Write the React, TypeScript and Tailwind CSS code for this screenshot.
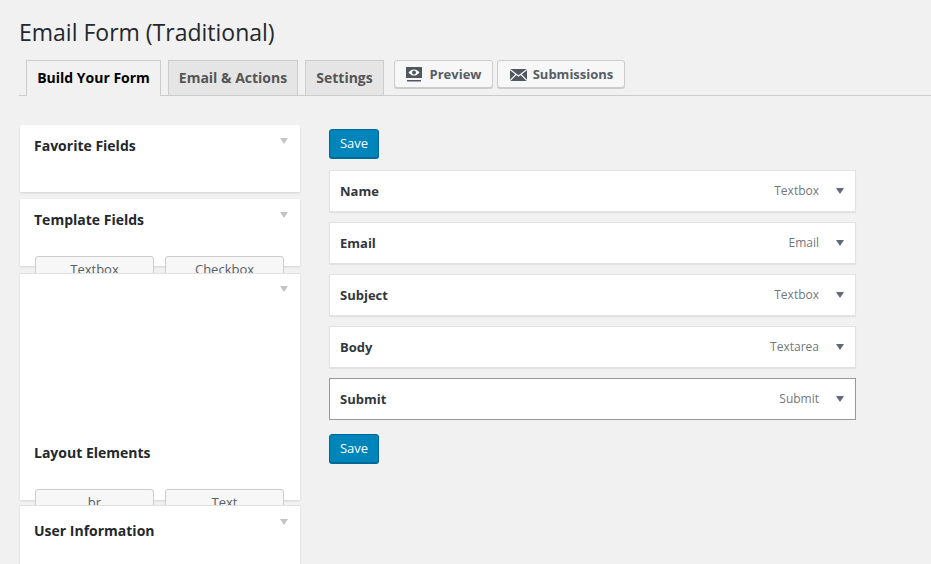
import React from 'react';

const Caret = ({ className }: { className: string }) => (
  <span className={`block w-0 h-0 border-l-[4px] border-r-[4px] border-t-[6px] border-l-transparent border-r-transparent ${className}`} />
);

const Panel = ({ title, height, gap, titleClass = 'pt-[11px]', buttons, caretTop = 'top-[13px]', topBorder }: {
  title?: string;
  height: string;
  gap: string;
  titleClass?: string;
  buttons?: string[];
  caretTop?: string;
  topBorder?: boolean;
}) => (
  <div className={`relative bg-white shadow-[0_1px_2px_rgba(0,0,0,0.12)] px-[14px] ${height} ${gap} ${topBorder ? 'border-t border-[#e2e2e2]' : ''}`}>
    <div className={`absolute right-[12px] ${caretTop}`}>
      <Caret className="border-t-[#c4c4c4]" />
    </div>
    {title && <h3 className={`text-[14px] leading-[20px] font-bold text-[#23282d] ${titleClass}`}>{title}</h3>}
    {buttons && (
      <div className="flex gap-[11px] pl-px mt-[26px]">
        {buttons.map((b) => (
          <div key={b} className="w-[119px] h-[30px] text-center bg-[#f7f7f7] border border-[#cccccc] rounded-[3px] text-[13px] leading-[24px] text-[#555d66]">
            {b}
          </div>
        ))}
      </div>
    )}
  </div>
);

const fields = [
  { name: 'Name', type: 'Textbox' },
  { name: 'Email', type: 'Email' },
  { name: 'Subject', type: 'Textbox' },
  { name: 'Body', type: 'Textarea' },
];

const Row = ({ name, type, active }: { name: string; type: string; active?: boolean }) => (
  <div className={`h-[42px] flex items-center bg-white border pl-[10px] pr-[11px] ${active ? 'border-[#999999]' : 'border-[#e2e2e2] shadow-[0_1px_1px_rgba(0,0,0,0.06)]'}`}>
    <span className="text-[13px] font-bold text-[#32373c] pt-[2px]">{name}</span>
    <span className="ml-auto text-[12px] text-[#72777c] mr-[17px]">{type}</span>
    <Caret className="border-t-[#646970]" />
  </div>
);

const SaveButton = () => (
  <button className="block w-[50px] h-[29px] pb-[2px] bg-[#0085ba] border border-[#006799] rounded-[3px] shadow-[0_1px_0_#006799] text-[13px] leading-[24px] text-white text-center">
    Save
  </button>
);

export default function App() {
  return (
    <div className="h-[564px] overflow-hidden bg-[#f1f1f1] font-['Open_Sans',sans-serif]">
      <div className="pl-[19px] pt-[16px]">
        <h1 className="text-[23px] leading-[32px] text-[#23282d]">Email Form (Traditional)</h1>
      </div>

      {/* Tabs */}
      <div className="ml-[19px] mt-[12px] h-[36px] border-b border-[#cccccc] flex items-start pl-[7px]">
        <div className="h-[36px] w-[135px] bg-[#f1f1f1] border border-b-0 border-[#cccccc] text-center text-[14px] leading-[34px] font-bold text-black relative z-10">
          Build Your Form
        </div>
        <div className="h-[35px] w-[130px] ml-[7px] bg-[#e5e5e5] border border-b-0 border-[#cccccc] text-center text-[14px] leading-[34px] font-bold text-[#555555]">
          Email &amp; Actions
        </div>
        <div className="h-[35px] w-[79px] ml-[7px] bg-[#e5e5e5] border border-b-0 border-[#cccccc] text-center text-[14px] leading-[34px] font-bold text-[#555555]">
          Settings
        </div>
        <div className="h-[28px] w-[99px] ml-[10px] pt-px flex items-center justify-center gap-[8px] bg-[#f7f7f7] border border-[#cccccc] rounded-[3px] shadow-[0_1px_0_#cccccc] text-[13px] font-bold text-[#555d66]">
          <svg width="16" height="15" viewBox="0 0 16 15">
            <path fill="#50575e" d="M0 0h16v11H0z" />
            <path fill="#fff" d="M2.500 5.500C4 3.400 6 2.400 8 2.400s4 1 5.500 3.100C12 7.600 10 8.600 8 8.600S4 7.600 2.500 5.500z" />
            <circle cx="8" cy="5.500" r="2" fill="#50575e" />
            <path fill="#50575e" d="M1 13h14v1.500H1z" />
          </svg>
          Preview
        </div>
        <div className="h-[28px] w-[128px] ml-[4px] pt-px flex items-center justify-center gap-[6px] bg-[#f7f7f7] border border-[#cccccc] rounded-[3px] shadow-[0_1px_0_#cccccc] text-[13px] font-bold text-[#555d66]">
          <svg width="17" height="12" viewBox="0 0 17 12" className="ml-px">
            <path fill="#50575e" d="M0 0h17v12H0z" />
            <path fill="none" stroke="#f7f7f7" strokeWidth="1.200" d="M0 0.500l8.500 6.500L17 0.500M0 11.500l6-6M17 11.500l-6-6" />
          </svg>
          Submissions
        </div>
      </div>

      <div className="flex items-start pl-[20px] pt-[29px]">
        {/* Sidebar */}
        <div className="w-[280px] shrink-0">
          <Panel title="Favorite Fields" height="h-[67px]" gap="mb-[7px]" />
          <Panel title="Template Fields" height="h-[67px]" gap="mb-[7px]" buttons={['Textbox', 'Checkbox']} />
          <div className="relative z-10">
            <Panel title="Layout Elements" titleClass="pt-[169px]" caretTop="top-[12px]" height="h-[227px]" gap="mb-[5px]" buttons={['br', 'Text']} topBorder />
          </div>
          <div className="relative z-20">
            <Panel title="User Information" titleClass="pt-[15px]" height="h-[80px]" gap="" topBorder />
          </div>
        </div>

        {/* Form fields */}
        <div className="ml-[29px] w-[527px] pt-[4px]">
          <SaveButton />
          <div className="flex flex-col gap-[10px] mt-[12px]">
            {fields.map((f) => (
              <Row key={f.name} name={f.name} type={f.type} />
            ))}
            <Row name="Submit" type="Submit" active />
          </div>
          <div className="mt-[14px]">
            <SaveButton />
          </div>
        </div>
      </div>
    </div>
  );
}
